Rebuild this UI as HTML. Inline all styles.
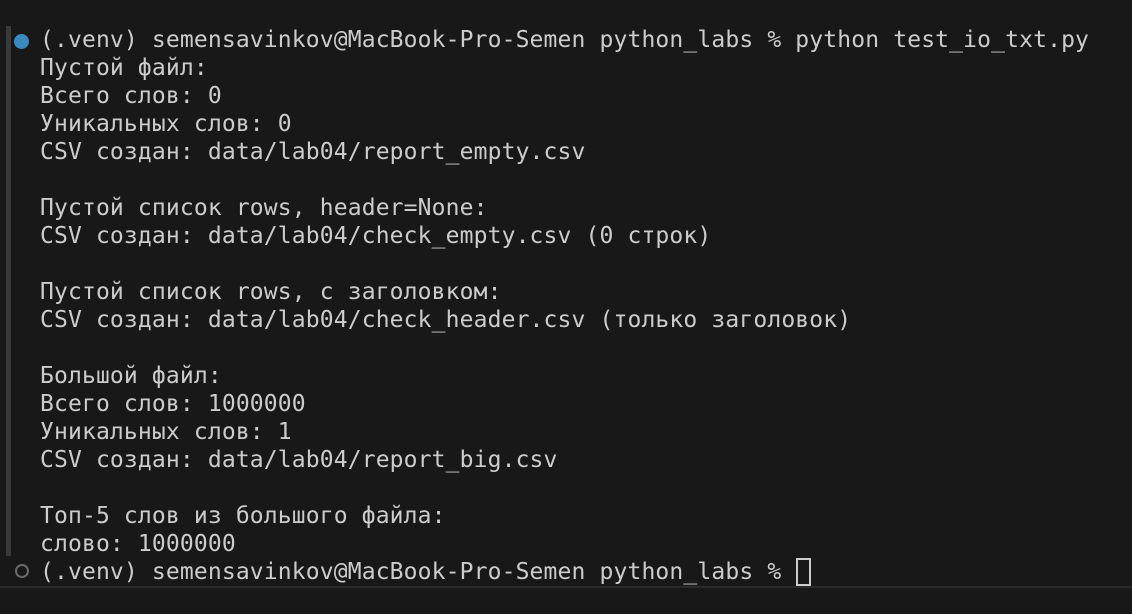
<!DOCTYPE html>
<html><head><meta charset="utf-8"><style>
body{margin:0;width:1132px;height:614px;background:#181818;overflow:hidden;position:relative}
.bar{position:absolute;left:6px;top:26px;width:5px;height:530px;background:#3a3a3a}
.dot{position:absolute;left:14px;top:34px;width:15px;height:15px;border-radius:50%;background:#3a8ac0}
.odot{position:absolute;left:15px;top:564px;width:10px;height:10px;border-radius:50%;border:2px solid #6a6a6a}
pre{position:absolute;left:40px;top:26px;margin:0;font-family:"DejaVu Sans Mono","Liberation Mono",monospace;font-size:23px;line-height:28px;letter-spacing:0.14px;color:#cccccc}
.cur{position:absolute;left:796px;top:558px;width:11px;height:24px;border:2px solid #cccccc}
.line{position:absolute;left:0;top:586px;width:1132px;height:2px;background:#2b2b2b}
</style></head><body>
<div class="bar"></div><div class="dot"></div><div class="odot"></div>
<pre>(.venv) semensavinkov@MacBook-Pro-Semen python_labs % python test_io_txt.py
Пустой файл:
Всего слов: 0
Уникальных слов: 0
CSV создан: data/lab04/report_empty.csv

Пустой список rows, header=None:
CSV создан: data/lab04/check_empty.csv (0 строк)

Пустой список rows, с заголовком:
CSV создан: data/lab04/check_header.csv (только заголовок)

Большой файл:
Всего слов: 1000000
Уникальных слов: 1
CSV создан: data/lab04/report_big.csv

Топ-5 слов из большого файла:
слово: 1000000
(.venv) semensavinkov@MacBook-Pro-Semen python_labs % </pre>
<div class="cur"></div>
<div class="line"></div>
</body></html>
